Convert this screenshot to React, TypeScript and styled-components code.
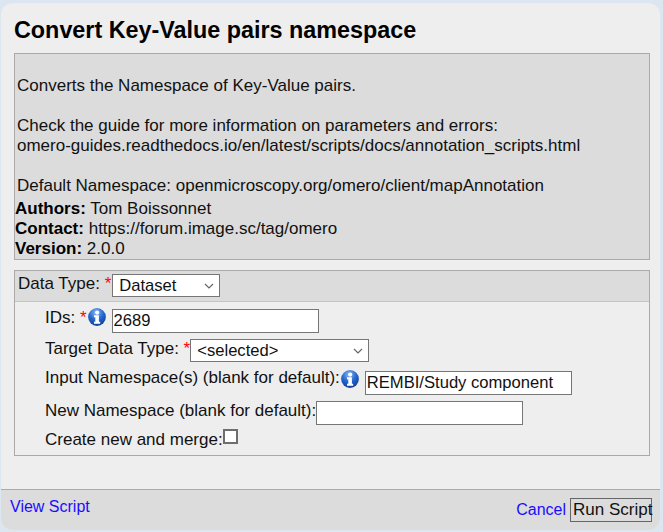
import React from "react";
import styled, { createGlobalStyle } from "styled-components";

const Global = createGlobalStyle`
  html, body { margin: 0; padding: 0; background: #dce6f0; }
  body { font-family: "Liberation Sans", Arial, sans-serif; font-size: 17px; color: #111; }
  * { box-sizing: border-box; }
`;

const Page = styled.div`
  width: 663px;
  height: 532px;
  padding: 3px 3px 2px 1px;
`;

const Panel = styled.div`
  height: 527px;
  background: #eeeeee;
  border-radius: 12px;
  display: flex;
  flex-direction: column;
  overflow: hidden;
`;

const Body = styled.div`
  flex: 1;
  padding: 0 10px 0 13px;
`;

const Title = styled.h1`
  margin: 0;
  padding-top: 14px;
  height: 50px;
  font-size: 23.35px;
  line-height: 26px;
  font-weight: bold;
  color: #000;
`;

const Info = styled.div`
  height: 207px;
  background: #dcdcdc;
  border: 1px solid #aaaaaa;
  line-height: 20px;
`;

const Description = styled.div`
  padding: 2px 2px 0;
  margin-bottom: 3px;
  white-space: pre-line;
`;

const Meta = styled.div`
  b { color: #000; }
`;

const FormBox = styled.div`
  margin-top: 10px;
  height: 186px;
  border: 1px solid #aaaaaa;
`;

const GroupHeader = styled.div`
  height: 31px;
  background: #dcdcdc;
  border-bottom: 1px solid #c4c4c4;
  padding: 3px 0 0 3px;
  display: flex;
  align-items: flex-start;
`;

const Row = styled.div<{ $top: number }>`
  display: flex;
  align-items: flex-start;
  padding-left: 30px;
  margin-top: ${(p) => p.$top}px;
`;

const Label = styled.span<{ $shift?: number }>`
  line-height: 18px;
  margin-top: ${(p) => p.$shift ?? 0}px;
  white-space: pre;
`;

const Req = styled.span`
  color: #ff0000;
`;

const TextInput = styled.input<{ $w: number; $gap?: number }>`
  width: ${(p) => p.$w}px;
  height: 24px;
  margin-left: ${(p) => p.$gap ?? 0}px;
  border: 1px solid #767676;
  border-radius: 0;
  padding: 1px 1px;
  font: 16.6px "Liberation Sans", Arial, sans-serif;
  color: #111;
  background: #fff;
  outline: none;
`;

const chevron =
  "data:image/svg+xml;utf8," +
  encodeURIComponent(
    '<svg xmlns="http://www.w3.org/2000/svg" width="10" height="6" viewBox="0 0 10 6"><path d="M1 1l4 4 4-4" fill="none" stroke="#666" stroke-width="1.2"/></svg>'
  );

const Select = styled.select<{ $w: number; $gap?: number }>`
  appearance: none;
  width: ${(p) => p.$w}px;
  height: 23px;
  margin-left: ${(p) => p.$gap ?? 0}px;
  border: 1px solid #767676;
  border-radius: 0;
  font: 16.6px "Liberation Sans", Arial, sans-serif;
  color: #111;
  background: #fff url("${chevron}") no-repeat right 5px center;
  padding: 0 0 0 6px;
`;

const Check = styled.span`
  display: block;
  width: 15px;
  height: 15px;
  border: 2px solid #6e6e6e;
  background: #fff;
`;

const IconWrap = styled.svg<{ $ml?: number; $mt?: number }>`
  display: block;
  width: 18px;
  height: 18px;
  flex: none;
  margin-left: ${(p) => p.$ml ?? 0}px;
  margin-top: ${(p) => p.$mt ?? 0}px;
`;

const Footer = styled.div`
  height: 41px;
  background: #dcdcdc;
  border-top: 1px solid #aaaaaa;
  display: flex;
  justify-content: space-between;
  padding: 8px 8px 0 9px;
`;

const FootLink = styled.a`
  color: #1a0dff;
  text-decoration: none;
  line-height: 18px;
  font-size: 16px;
`;

const FooterRight = styled.div`
  display: flex;
  align-items: flex-start;
  gap: 4px;
  a { margin-top: 3px; }
`;

const RunButton = styled.button`
  height: 24px;
  width: 82px;
  padding: 0 0 0 2px;
  border: 1px solid #666;
  background: #dcdcdc;
  font: 17px "Liberation Sans", Arial, sans-serif;
  color: #111;
  white-space: nowrap;
`;

const InfoIcon = ({ id, ml = 0, mt = 0 }: { id: string; ml?: number; mt?: number }) => (
  <IconWrap viewBox="0 0 18 18" $ml={ml} $mt={mt}>
    <defs>
      <radialGradient id={id} cx="45%" cy="25%" r="80%">
        <stop offset="0%" stopColor="#8db8f0" />
        <stop offset="50%" stopColor="#2468d0" />
        <stop offset="100%" stopColor="#0e3a8e" />
      </radialGradient>
    </defs>
    <circle cx="9" cy="9" r="8.9" fill={`url(#${id})`} />
    <circle cx="9.2" cy="4.6" r="2.1" fill="#fff" />
    <path d="M6 7.3h4.9v6.5h1.3v1.9H6v-1.9h1.3V9.2H6z" fill="#fff" />
  </IconWrap>
);

export default function App() {
  return (
    <Page>
      <Global />
      <Panel>
        <Body>
          <Title>Convert Key-Value pairs namespace</Title>
          <Info>
            <Description>
              {"\nConverts the Namespace of Key-Value pairs.\n\nCheck the guide for more information on parameters and errors:\nomero-guides.readthedocs.io/en/latest/scripts/docs/annotation_scripts.html\n\nDefault Namespace: openmicroscopy.org/omero/client/mapAnnotation"}
            </Description>
            <Meta><b>Authors:</b> Tom Boissonnet</Meta>
            <Meta><b>Contact:</b> https://forum.image.sc/tag/omero</Meta>
            <Meta><b>Version:</b> 2.0.0</Meta>
          </Info>
          <FormBox>
            <GroupHeader>
              <Label $shift={1}>Data Type: <Req>*</Req></Label>
              <Select $w={108} $gap={1} defaultValue="Dataset">
                <option>Dataset</option>
              </Select>
            </GroupHeader>
            <Row $top={7}>
              <Label>IDs: <Req>*</Req></Label>
              <InfoIcon id="i1" ml={1} mt={-1} />
              <TextInput $w={207} $gap={6} defaultValue="2689" />
            </Row>
            <Row $top={6}>
              <Label $shift={1}>Target Data Type: <Req>*</Req></Label>
              <Select $w={179} defaultValue="<selected>">
                <option>{"<selected>"}</option>
              </Select>
            </Row>
            <Row $top={9}>
              <Label $shift={-2}>Input Namespace(s) (blank for default):</Label>
              <InfoIcon id="i2" ml={1} mt={-1} />
              <TextInput $w={207} $gap={6} defaultValue="REMBI/Study component" />
            </Row>
            <Row $top={6}>
              <Label $shift={1}>New Namespace (blank for default):</Label>
              <TextInput $w={207} />
            </Row>
            <Row $top={4}>
              <Label $shift={2}>Create new and merge:</Label>
              <Check />
            </Row>
          </FormBox>
        </Body>
        <Footer>
          <FootLink href="#">View Script</FootLink>
          <FooterRight>
            <FootLink href="#">Cancel</FootLink>
            <RunButton>Run Script</RunButton>
          </FooterRight>
        </Footer>
      </Panel>
    </Page>
  );
}
